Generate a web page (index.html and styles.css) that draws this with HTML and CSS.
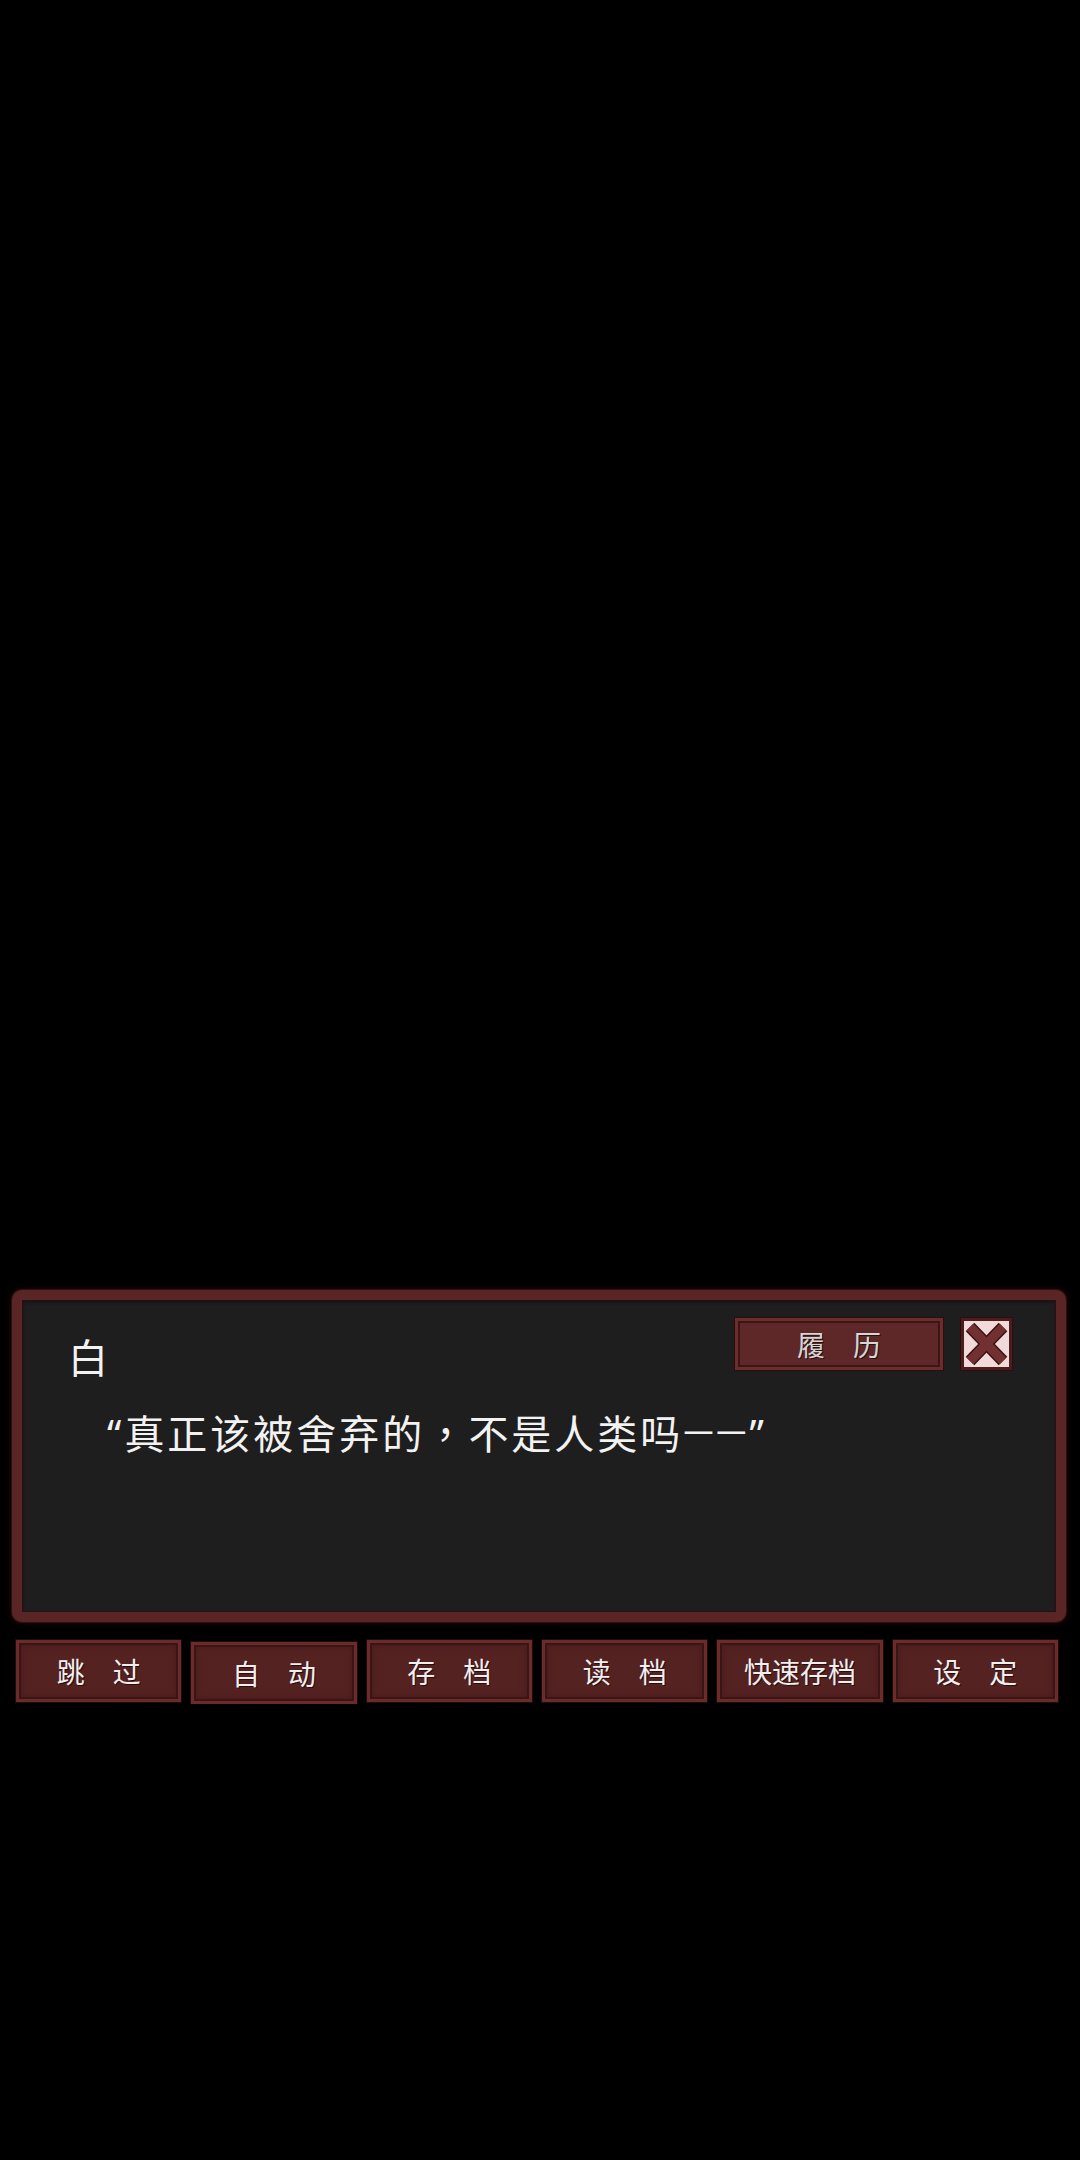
FILE: index.html
```html
<!DOCTYPE html>
<html lang="zh-CN">
<head>
  <meta charset="UTF-8" />
  <meta name="viewport" content="width=device-width, initial-scale=1.0" />
  <title>对话</title>
  <link rel="stylesheet" href="styles.css">
</head>
<body>
  <div class="stage"></div>

  <div class="dialog">
    <div class="dialog-tools">
      <button class="history-btn">履　历</button>
      <button class="close-btn" aria-label="关闭">
        <svg width="45" height="46" viewBox="0 0 45 46">
          <path d="M6 6 L39 40 M39 6 L6 40" stroke="#3a1414" stroke-width="12" stroke-linecap="butt" />
          <path d="M6 6 L39 40 M39 6 L6 40" stroke="#733030" stroke-width="9" stroke-linecap="butt" />
        </svg>
      </button>
    </div>
    <div class="speaker">白</div>
    <div class="line"><span class="quote">“</span>真正该被舍弃的<span class="comma" lang="zh-TW">，</span>不是人类吗<span class="dash">——</span><span class="quote">”</span></div>
  </div>

  <div class="menu">
    <button class="menu-btn">跳　过</button>
    <button class="menu-btn is-down">自　动</button>
    <button class="menu-btn">存　档</button>
    <button class="menu-btn">读　档</button>
    <button class="menu-btn">快速存档</button>
    <button class="menu-btn">设　定</button>
  </div>
</body>
</html>
```

FILE: styles.css
```css
body {
  margin: 0;
  background-color: #000;
  font-family: "Noto Sans CJK SC", "Noto Sans", sans-serif;
  color: #f2f2f2;
}

.stage {
  height: 1290px;
}

.dialog {
  position: relative;
  margin-left: 12px;
  width: 1054px;
  height: 332px;
  box-sizing: border-box;
  border: 10px solid #592525;
  border-radius: 10px;
  background-color: #1e1e1e;
  box-shadow: 0 0 0 1px #2c0f0f, 0 0 6px 2px #1a0606, inset 0 0 0 1px #2a1010, inset 0 2px 3px #101010;
  padding: 32px 0 0 46px;
}

.speaker {
  font-size: 40px;
  line-height: 48px;
}

.line {
  margin-top: 26px;
  margin-left: 39px;
  font-size: 40px;
  line-height: 48px;
  letter-spacing: 3px;
}

.quote {
  font-family: "Noto Sans", sans-serif;
}

.comma {
  font-family: "Noto Sans CJK TC", sans-serif;
}

.dash {
  font-family: "Noto Sans", sans-serif;
  font-size: 30px;
  vertical-align: 8px;
}

.dialog-tools {
  position: absolute;
  top: 18px;
  right: 44px;
  display: flex;
  gap: 18px;
}

.history-btn {
  width: 208px;
  height: 52px;
  box-sizing: border-box;
  font-family: inherit;
  font-size: 28px;
  color: #d6d6d6;
  background-color: #5e2828;
  border: 3px solid #6e2d2d;
  box-shadow: inset 0 0 0 2px #3c1616, 0 0 0 1px #2a0e0e;
  text-shadow: 1px 1px 0 #2a0e0e;
  padding: 0;
  line-height: 1;
}

.close-btn {
  width: 51px;
  height: 52px;
  box-sizing: border-box;
  padding: 0;
  background-color: #f3dada;
  border: 3px solid #4e1c1c;
  box-shadow: 0 0 0 1px #2a0e0e;
  display: flex;
  align-items: center;
  justify-content: center;
}

.menu {
  display: grid;
  grid-template-columns: repeat(6, 1fr);
  gap: 10px;
  width: 1042px;
  margin: 18px 0 0 16px;
  align-items: start;
}

.menu-btn {
  height: 62px;
  box-sizing: border-box;
  padding: 0;
  font-family: inherit;
  font-size: 28px;
  line-height: 1;
  color: #f2eeee;
  background-color: #552222;
  border: 3px solid #6c2b2b;
  box-shadow: inset 0 0 0 2px #3a1515, inset 0 0 6px 3px #4a1c1c, 0 0 0 1px #200a0a;
  text-shadow: 1px 1px 0 #2a0c0c;
}

.menu-btn.is-down {
  margin-top: 2px;
}
```
